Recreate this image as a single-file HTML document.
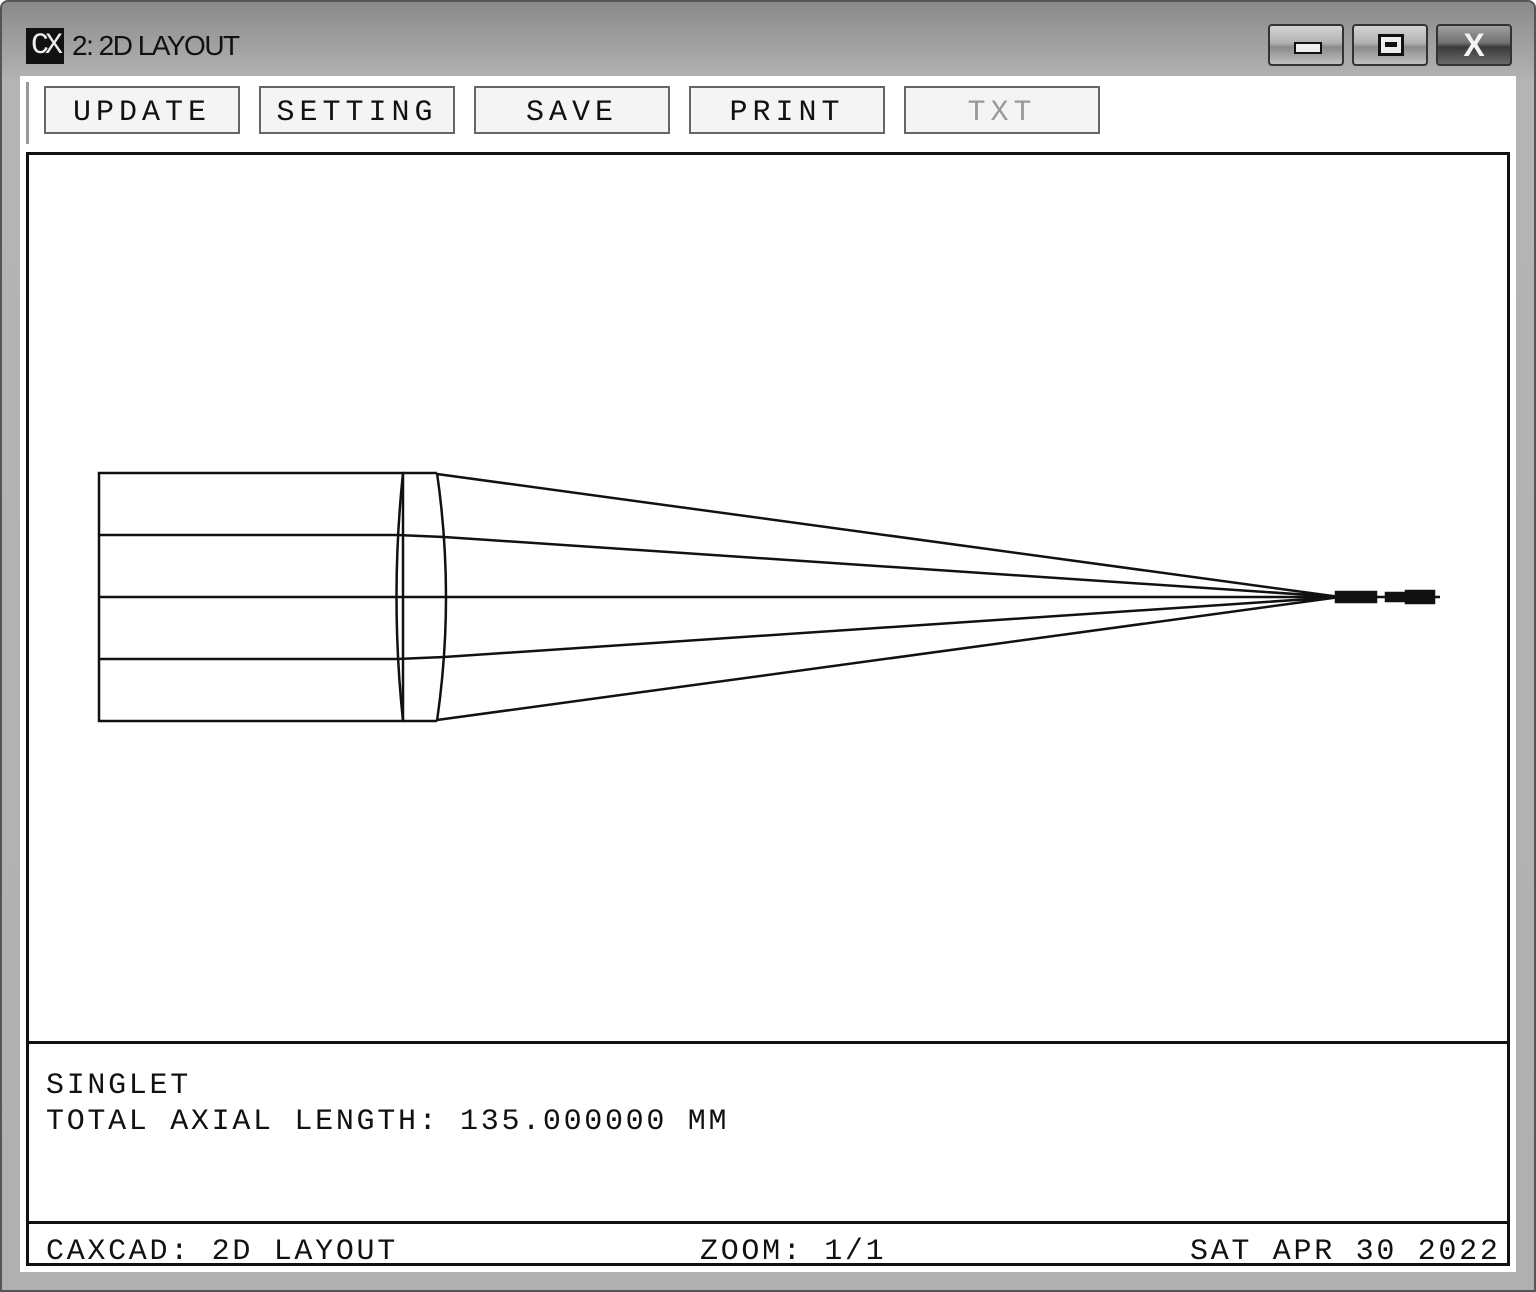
<!DOCTYPE html>
<html><head><meta charset="utf-8"><style>
html,body{margin:0;padding:0;width:1536px;height:1292px;overflow:hidden;background:#fff}
.win{position:absolute;left:0;top:0;width:1536px;height:1292px;background:linear-gradient(#8a8a8a,#b4b4b4 80px,#b0b0b0);border-radius:8px 8px 0 0;box-sizing:border-box;border:2px solid #555}
.title{position:absolute;left:24px;top:26px;height:36px;display:flex;align-items:center}
.cx{background:#111;color:#eee;font:30px "Liberation Mono",monospace;width:38px;height:36px;line-height:36px;text-align:center;letter-spacing:-4px}
.tt{font:28px "Liberation Sans",sans-serif;color:#111;margin-left:8px;letter-spacing:-1.5px}
.wb{position:absolute;top:22px;height:42px;border:2px solid #333;border-radius:4px;background:linear-gradient(#d4d4d4,#b0b0b0 45%,#8a8a8a 55%,#c0c0c0);box-sizing:border-box}
.tool{position:absolute;left:20px;top:76px;width:1496px;height:70px;background:#fff}
.btn{position:absolute;top:10px;width:196px;height:48px;border:2px solid #666;box-sizing:border-box;background:#f4f4f4;font:30px "Liberation Mono",monospace;letter-spacing:5px;text-align:center;line-height:50px;color:#111}
.panel{position:absolute;left:20px;top:146px;width:1496px;height:1126px;background:#fff}
.frame{position:absolute;left:26px;top:152px;width:1484px;height:1114px;border:3px solid #111;box-sizing:border-box}
.t{position:absolute;font:30px "Liberation Mono",monospace;letter-spacing:2.7px;color:#111;white-space:pre;line-height:30px}
</style></head><body>
<div class="win">
<div class="title"><div class="cx">CX</div><div class="tt">2: 2D LAYOUT</div></div>
<div class="wb" style="left:1266px;width:76px"><div style="position:absolute;left:24px;top:16px;width:24px;height:8px;border:2px solid #111;background:#eee"></div></div>
<div class="wb" style="left:1350px;width:76px"><div style="position:absolute;left:24px;top:8px;width:20px;height:16px;border:3px solid #111;background:#eee"><div style="margin:5px 4px;height:5px;background:#111"></div></div></div>
<div class="wb" style="left:1434px;width:76px;background:linear-gradient(#a0a0a0,#707070 45%,#3a3a3a 55%,#6a6a6a)"><div style="position:absolute;left:0;width:72px;top:0;text-align:center;font:bold 32px 'Liberation Sans',sans-serif;color:#f4f4f4;line-height:38px">X</div></div>
</div>
<div class="tool">
<div style="position:absolute;left:6px;top:6px;width:3px;height:62px;background:#999"></div>
<div class="btn" style="left:24px">UPDATE</div>
<div class="btn" style="left:239px">SETTING</div>
<div class="btn" style="left:454px">SAVE</div>
<div class="btn" style="left:669px">PRINT</div>
<div class="btn" style="left:884px;color:#999">TXT</div>
</div>
<div class="panel"></div>
<div class="frame"></div>
<div style="position:absolute;left:28px;top:1041px;width:1480px;height:3px;background:#111"></div>
<div style="position:absolute;left:28px;top:1221px;width:1480px;height:3px;background:#111"></div>
<svg style="position:absolute;left:0;top:0" width="1536" height="1292" fill="none" stroke="#111" stroke-width="2.5">
<rect x="99" y="473" width="304" height="248"/>
<line x1="99" y1="535" x2="397" y2="535"/><line x1="99" y1="597" x2="1440" y2="597"/><line x1="99" y1="659" x2="397" y2="659"/>
<path d="M403 473 Q390 597 403 721"/><path d="M437 473 Q455 597 437 721"/>
<line x1="403" y1="473" x2="437" y2="473"/><line x1="403" y1="721" x2="437" y2="721"/>
<path d="M437 474 L1340 597 M397 535 L444 537 L1340 597 M397 659 L444 657 L1340 597 M437 720 L1340 597"/>
<rect x="1336" y="592" width="40" height="10" fill="#111"/><rect x="1386" y="593" width="20" height="8" fill="#111"/><rect x="1406" y="591" width="28" height="12" fill="#111"/>
</svg>
<div class="t" style="left:46px;top:1071px">SINGLET</div>
<div class="t" style="left:46px;top:1107px">TOTAL AXIAL LENGTH: 135.000000 MM</div>
<div class="t" style="left:46px;top:1237px">CAXCAD: 2D LAYOUT</div>
<div class="t" style="left:700px;top:1237px">ZOOM: 1/1</div>
<div class="t" style="left:1190px;top:1237px">SAT APR 30 2022</div>
</body></html>
